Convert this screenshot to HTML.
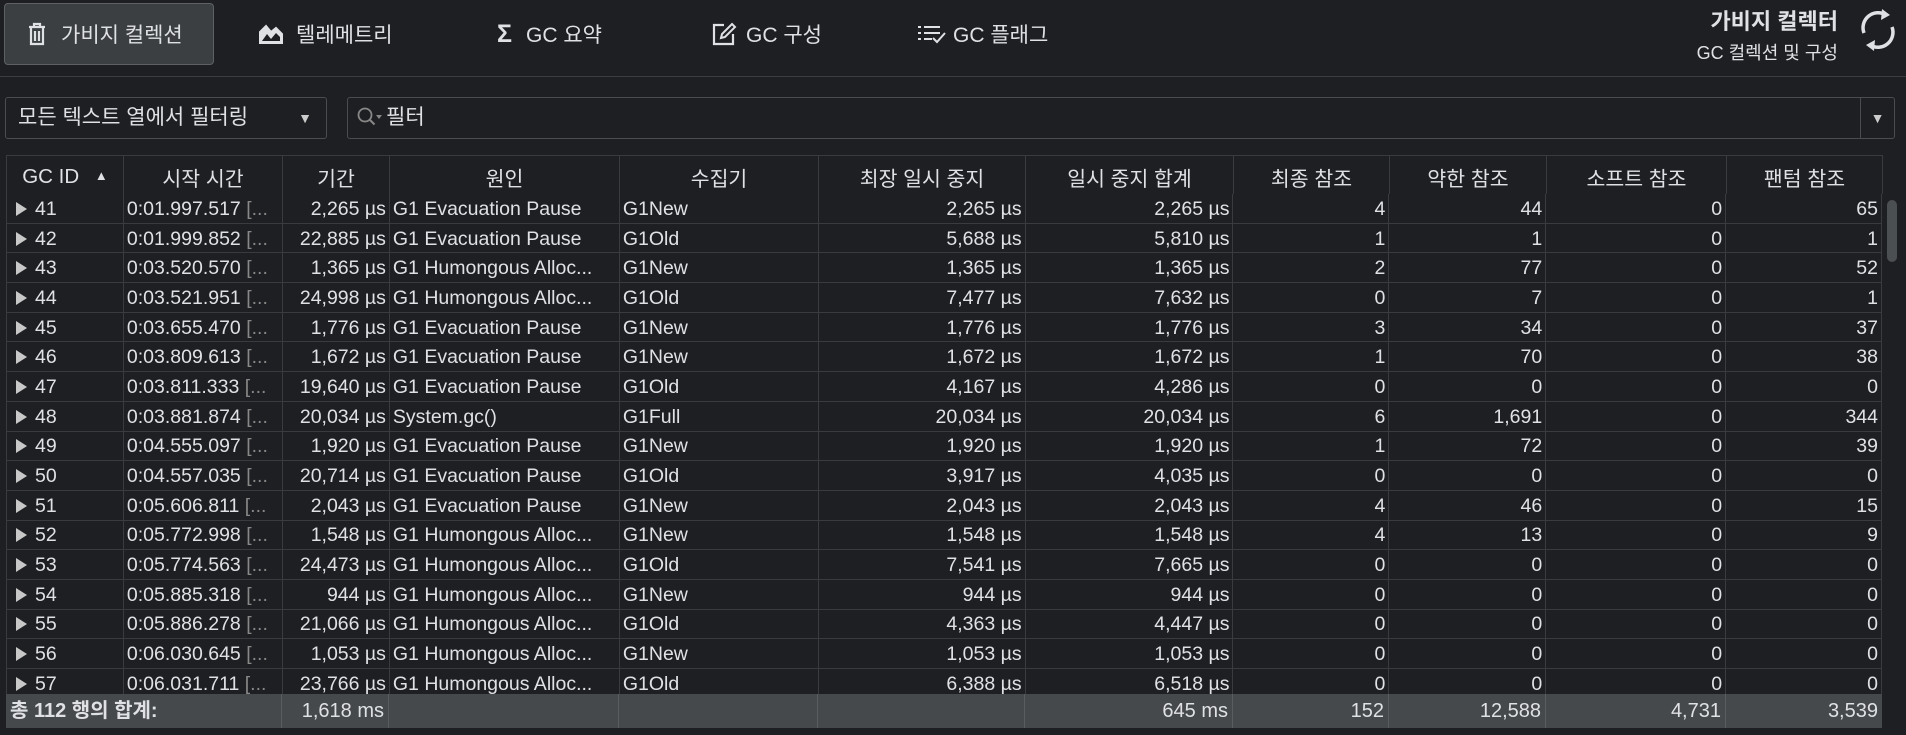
<!DOCTYPE html>
<html><head><meta charset="utf-8">
<style>
*{box-sizing:border-box;margin:0;padding:0}
body{width:1906px;height:735px;background:#1e1f22;color:#dfe1e5;font-family:"Liberation Sans","Noto Sans CJK KR",sans-serif;overflow:hidden;position:relative}
.abs{position:absolute}
.btn{position:absolute;top:3px;height:62px;display:flex;align-items:center;font-size:21px;color:#dfe1e5;white-space:nowrap}
.sel{left:4px;width:210px;background:#3c3f41;border:1px solid #5e6164;border-radius:4px}
.sep{position:absolute;left:0;top:76px;width:1906px;height:1px;background:#3c3d40}
.box{position:absolute;top:97px;height:42px;border:1px solid #4a4c50;border-radius:3px;background:#1e1f22}
table{position:absolute;left:6px;top:155px;border-collapse:collapse;table-layout:fixed;font-size:19.5px}
td,th{border:1px solid #3a3b3e;height:29.7px;padding:0 3px;white-space:nowrap;overflow:hidden}
th{font-weight:normal;height:39px;background:#1e1f22;color:#dfe1e5;font-size:20.5px;padding-top:3px}
td{background:#1e1f22;padding-top:2px}
td.r{text-align:right}
.tri{display:inline-block;width:0;height:0;border-left:11px solid #c8c8c8;border-top:7px solid transparent;border-bottom:7px solid transparent;margin:0 8px 0 6px;vertical-align:-1px}
.g{color:#888}
.foot{position:absolute;left:6px;top:694px;width:1876px;height:34px;background:#46494b;font-size:20px}
.foot div{position:absolute;top:0;height:34px;line-height:34px;border-right:1px solid #5a5d60;text-align:right;padding-right:4px}
</style></head><body>
<div class="btn sel"><svg style="margin-left:22px" width="20" height="24" viewBox="0 0 20 24"><path d="M2 5h16M7 5V2h6v3M4 5v17h12V5M8 9v10M12 9v10" stroke="#dfe1e5" stroke-width="2.2" fill="none"/></svg><span style="margin-left:14px">가비지 컬렉션</span></div>
<div class="btn" style="left:258px"><svg width="26" height="22" viewBox="0 0 26 22"><path d="M2 20V9l6-6 5 6 5-4 6 6v9z" fill="#dfe1e5"/><path d="M2 20V9l6-6 5 6 5-4 6 6v9z" stroke="#dfe1e5" stroke-width="2" fill="none"/><path d="M4 18l5-7 4 5 5-6 4 4v4z" fill="#1e1f22"/></svg><span style="margin-left:12px">텔레메트리</span></div>
<div class="btn" style="left:497px"><span style="font-size:25px;font-weight:bold">Σ</span><span style="margin-left:14px">GC 요약</span></div>
<div class="btn" style="left:712px"><svg width="26" height="24" viewBox="0 0 26 24"><path d="M12 3H2v19h19V12" stroke="#dfe1e5" stroke-width="2.2" fill="none"/><path d="M20 2l3 3-10 10-4 1 1-4z" stroke="#dfe1e5" stroke-width="2" fill="none"/></svg><span style="margin-left:8px">GC 구성</span></div>
<div class="btn" style="left:917px"><svg width="30" height="22" viewBox="0 0 30 22"><path d="M1 4h3M7 4h16M1 10h3M7 10h16M1 16h3M7 16h8M16 15l4 4 8-9" stroke="#dfe1e5" stroke-width="2" fill="none"/></svg><span style="margin-left:6px">GC 플래그</span></div>
<div class="abs" style="right:68px;top:4px;font-size:22px;font-weight:bold;text-align:right">가비지 컬렉터</div>
<div class="abs" style="right:68px;top:39px;font-size:18px;text-align:right">GC 컬렉션 및 구성</div>
<svg class="abs" style="left:1856px;top:7px" width="44" height="46" viewBox="0 0 44 46"><path d="M8 26A15 15 0 0 1 30 8" stroke="#dfe1e5" stroke-width="3.5" fill="none"/><path d="M26 2l8 6-9 5z" fill="#dfe1e5"/><path d="M36 20A15 15 0 0 1 14 38" stroke="#dfe1e5" stroke-width="3.5" fill="none"/><path d="M18 44l-8-6 9-5z" fill="#dfe1e5"/></svg>
<div class="sep"></div>
<div class="box" style="left:5px;width:322px;font-size:21px;line-height:40px;padding-left:12px">모든 텍스트 열에서 필터링<span style="position:absolute;right:14px;font-size:14px;color:#ccc">▼</span></div>
<div class="box" style="left:347px;width:1548px;font-size:21px;line-height:40px;padding-left:8px"><svg width="28" height="22" viewBox="0 0 28 22" style="vertical-align:-4px"><circle cx="9" cy="9" r="6.5" stroke="#888" stroke-width="1.8" fill="none"/><path d="M13.5 13.5l5 5" stroke="#888" stroke-width="2"/><path d="M20 9h6l-3 4z" fill="#888"/></svg><span style="color:#dfe1e5;margin-left:2px">필터</span><div style="position:absolute;right:0;top:0;width:34px;height:40px;border-left:1px solid #4a4c50;text-align:center;font-size:14px;color:#ccc">▼</div></div>
<table>
<colgroup><col style="width:117px"><col style="width:159px"><col style="width:107px"><col style="width:230px"><col style="width:199px"><col style="width:207px"><col style="width:208px"><col style="width:156px"><col style="width:157px"><col style="width:180px"><col style="width:156px"></colgroup>
<tr><th>GC ID <span style="font-size:13px;margin-left:10px;vertical-align:3px">▲</span></th><th>시작 시간</th><th>기간</th><th>원인</th><th>수집기</th><th>최장 일시 중지</th><th>일시 중지 합계</th><th>최종 참조</th><th>약한 참조</th><th>소프트 참조</th><th>팬텀 참조</th></tr>
</table>
<div id="rows"></div>
<div class="abs" style="left:1882px;top:194px;width:22px;height:500px;background:#1e1f22"></div>
<div class="abs" style="left:1887px;top:200px;width:10px;height:62px;background:#4c4f52;border-radius:5px"></div>
<div class="foot">
<div style="left:0;width:276px;text-align:left;padding-left:4px;font-weight:bold">총 112 행의 합계:</div>
<div style="left:276px;width:107px">1,618 ms</div>
<div style="left:383px;width:230px"></div>
<div style="left:613px;width:199px"></div>
<div style="left:812px;width:207px"></div>
<div style="left:1019px;width:208px">645 ms</div>
<div style="left:1227px;width:156px">152</div>
<div style="left:1383px;width:157px">12,588</div>
<div style="left:1540px;width:180px">4,731</div>
<div style="left:1720px;width:156px;border-right:none">3,539</div>
</div>
<script>
var d=[
[41,"0:01.997.517","2,265","G1 Evacuation Pause","G1New","2,265","2,265",4,44,0,65],
[42,"0:01.999.852","22,885","G1 Evacuation Pause","G1Old","5,688","5,810",1,1,0,1],
[43,"0:03.520.570","1,365","G1 Humongous Alloc...","G1New","1,365","1,365",2,77,0,52],
[44,"0:03.521.951","24,998","G1 Humongous Alloc...","G1Old","7,477","7,632",0,7,0,1],
[45,"0:03.655.470","1,776","G1 Evacuation Pause","G1New","1,776","1,776",3,34,0,37],
[46,"0:03.809.613","1,672","G1 Evacuation Pause","G1New","1,672","1,672",1,70,0,38],
[47,"0:03.811.333","19,640","G1 Evacuation Pause","G1Old","4,167","4,286",0,0,0,0],
[48,"0:03.881.874","20,034","System.gc()","G1Full","20,034","20,034",6,"1,691",0,344],
[49,"0:04.555.097","1,920","G1 Evacuation Pause","G1New","1,920","1,920",1,72,0,39],
[50,"0:04.557.035","20,714","G1 Evacuation Pause","G1Old","3,917","4,035",0,0,0,0],
[51,"0:05.606.811","2,043","G1 Evacuation Pause","G1New","2,043","2,043",4,46,0,15],
[52,"0:05.772.998","1,548","G1 Humongous Alloc...","G1New","1,548","1,548",4,13,0,9],
[53,"0:05.774.563","24,473","G1 Humongous Alloc...","G1Old","7,541","7,665",0,0,0,0],
[54,"0:05.885.318","944","G1 Humongous Alloc...","G1New","944","944",0,0,0,0],
[55,"0:05.886.278","21,066","G1 Humongous Alloc...","G1Old","4,363","4,447",0,0,0,0],
[56,"0:06.030.645","1,053","G1 Humongous Alloc...","G1New","1,053","1,053",0,0,0,0],
[57,"0:06.031.711","23,766","G1 Humongous Alloc...","G1Old","6,388","6,518",0,0,0,0]];
var h='<div style="position:absolute;left:6px;top:194px;width:1876px;height:500px;overflow:hidden"><table style="left:0;top:-1px"><colgroup><col style="width:117px"><col style="width:159px"><col style="width:107px"><col style="width:230px"><col style="width:199px"><col style="width:207px"><col style="width:208px"><col style="width:156px"><col style="width:157px"><col style="width:180px"><col style="width:156px"></colgroup>';
d.forEach(function(r){h+='<tr><td><span class="tri"></span>'+r[0]+'</td><td>'+r[1]+' <span class="g">[...</span></td><td class="r">'+r[2]+' µs</td><td>'+r[3]+'</td><td>'+r[4]+'</td><td class="r">'+r[5]+' µs</td><td class="r">'+r[6]+' µs</td><td class="r">'+r[7]+'</td><td class="r">'+r[8]+'</td><td class="r">'+r[9]+'</td><td class="r">'+r[10]+'</td></tr>';});
h+='</table></div>';
document.getElementById('rows').outerHTML=h;
</script>
</body></html>
